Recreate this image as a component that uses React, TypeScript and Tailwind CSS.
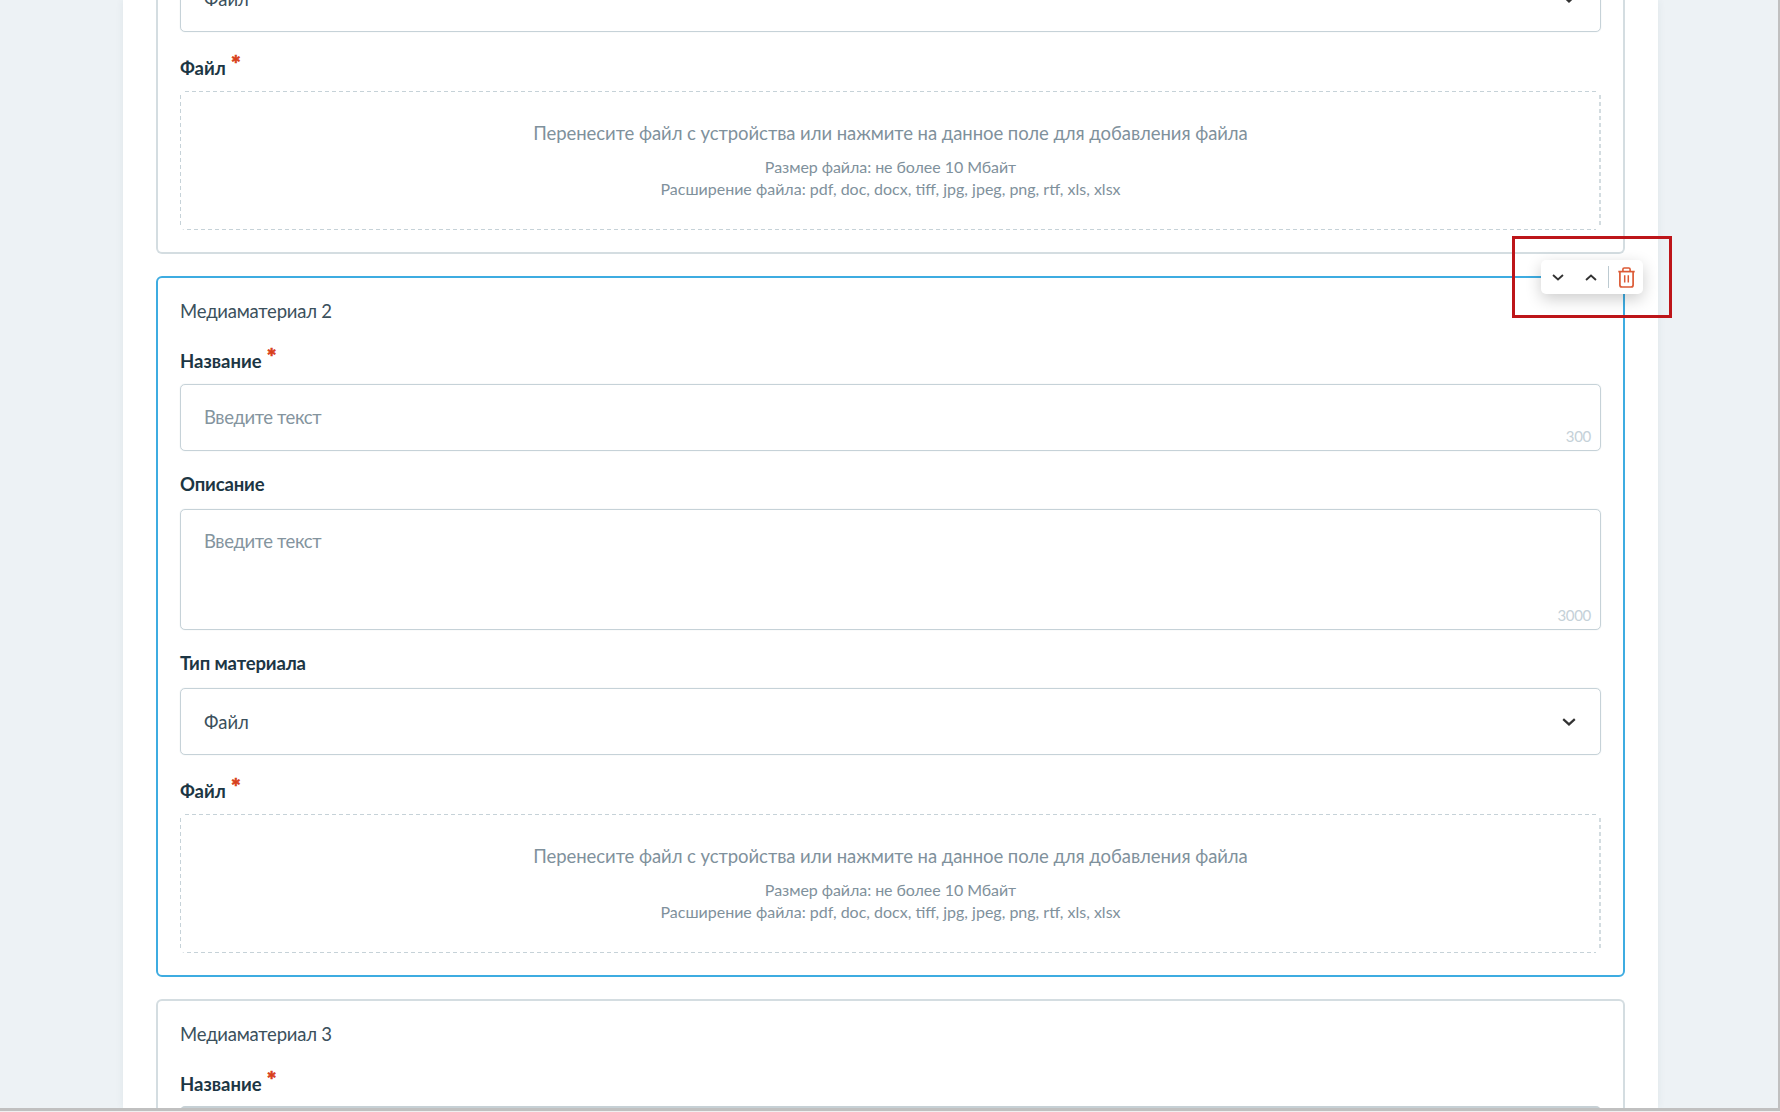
import React from 'react';

function Chevron({ className, up }: { className: string; up?: boolean }) {
  return (
    <svg viewBox="0 0 14 8" fill="none" className={className}>
      <path d={up ? 'M1.2 6.9 7 1.6l5.8 5.3' : 'M1.2 1.1 7 6.4l5.8-5.3'} stroke="#333333" strokeWidth="2.2" />
    </svg>
  );
}

function TrashIcon() {
  return (
    <svg viewBox="0 0 17 21" fill="none" stroke="#dc5a35" className="h-[21px] w-[17px]">
      <path d="M0.3 4.6H16.7" strokeWidth="1.7" />
      <path d="M4.9 4.4V2.3Q4.9 1 6.2 1H10.8Q12.1 1 12.1 2.3V4.4" strokeWidth="1.6" />
      <path d="M1.9 5V18Q1.9 20 3.9 20H13.1Q15.1 20 15.1 18V5" strokeWidth="1.7" />
      <path d="M6.7 8.3V15.6M10.3 8.3V15.6" strokeWidth="1.5" />
    </svg>
  );
}

function Label({ text, required, className }: { text: string; required?: boolean; className: string }) {
  return (
    <div className={`flex h-6 items-start text-[18.5px] leading-6 font-bold text-[#1c3644] ${className}`}>
      <span className={required ? '' : 'tracking-[-0.15px]'}>{text}</span>
      {required && (
        <span className="-mt-[5px] ml-[5px] text-[23px] leading-6 font-black text-[#d8401c] [-webkit-text-stroke:0.6px_#d8401c]">
          *
        </span>
      )}
    </div>
  );
}

const fieldBorder = 'border-[1.5px] border-[#c6d2d8] rounded-[5px] shadow-[0_0_1px_#c6d2d8]';

function TextField({ limit, className, pad }: { limit: string; className: string; pad: string }) {
  return (
    <div className={`relative px-[23px] ${fieldBorder} ${className} ${pad}`}>
      <span className="block text-[18.5px] leading-6 tracking-[-0.4px] text-[#84949e]">Введите текст</span>
      <span className="absolute right-[9px] bottom-[4px] text-[15px] leading-5 tracking-[-0.3px] text-[#c5d1d8]">{limit}</span>
    </div>
  );
}

function TypeSelect({ className }: { className: string }) {
  return (
    <div className={`flex h-[67px] items-center justify-between pr-[24px] pl-[23px] ${fieldBorder} ${className}`}>
      <span className="text-[18.5px] leading-6 text-[#3b505c]">Файл</span>
      <Chevron className="h-[8px] w-[14px]" />
    </div>
  );
}

function DropZone() {
  return (
    <div className="mt-[10px] flex h-[140px] flex-col items-center rounded-[5px] bg-[repeating-linear-gradient(90deg,#c6d2d8_0_4px,transparent_4px_7px),repeating-linear-gradient(90deg,#c6d2d8_0_4px,transparent_4px_7px),repeating-linear-gradient(180deg,#c6d2d8_0_4px,transparent_4px_7px),repeating-linear-gradient(180deg,#d3dce0_0_4px,transparent_4px_7px)] [background-position:5px_1px,0px_139px,0px_5px,100%_5px] [background-repeat:no-repeat] [background-size:calc(100%_-_10px)_1px,calc(100%_-_5px)_1px,1px_calc(100%_-_8px),2px_calc(100%_-_8px)] pt-[31px] text-[#7f919c]">
      <div className="text-[18.5px] leading-6 tracking-[-0.06px] whitespace-nowrap">
        Перенесите файл с устройства или нажмите на данное поле для добавления файла
      </div>
      <div className="mt-[10px] text-[16px] leading-[23px] tracking-[-0.06px] whitespace-nowrap">Размер файла: не более 10 Мбайт</div>
      <div className="-mt-px text-[16px] leading-[23px] whitespace-nowrap">
        Расширение файла: pdf, doc, docx, tiff, jpg, jpeg, png, rtf, xls, xlsx
      </div>
    </div>
  );
}

function CardTitle({ n }: { n: number }) {
  return (
    <div className="mt-[21px] text-[18.5px] leading-6 tracking-[-0.22px] text-[#3b505c]">Медиаматериал {n}</div>
  );
}

function Toolbar() {
  return (
    <div className="absolute -top-[18px] right-[-20px] flex h-[34px] w-[102px] items-center rounded-[5px] bg-white shadow-[0_5px_16px_rgba(0,0,0,0.2)]">
      <Chevron className="ml-[10.5px] h-[7px] w-[12px]" />
      <Chevron up className="ml-[21px] h-[7px] w-[12px]" />
      <span className="ml-[11.5px] h-[22px] w-px bg-[#bccad1]" />
      <span className="ml-[8.5px]">
        <TrashIcon />
      </span>
    </div>
  );
}

export default function App() {
  return (
    <div className="h-[1112px] w-[1780px] overflow-hidden bg-[#f0f0f0] font-['Lato','Open_Sans',sans-serif]">
      <div className="h-[1111px] overflow-hidden border-r-2 border-b-[3px] border-[#c0c0c0] bg-[#edf2f5]">
        <main className="relative ml-[123px] h-[1108px] w-[1535px] bg-white px-[33px] shadow-[0_0_8px_rgba(40,70,80,0.07)]">
          <section className="h-[254px] w-[1469px] rounded-b-[6px] border-x-2 border-b-2 border-[#d4dde1] px-[22px]">
            <TypeSelect className="relative -top-[35px] -mb-[35px]" />
            <Label text="Файл" required className="mt-[24px]" />
            <DropZone />
          </section>

          <section className="relative mt-[22px] h-[701px] w-[1469px] rounded-[6px] border-2 border-[#3eace1] px-[22px] pt-px">
            <div className="-mt-px flow-root">
              <CardTitle n={2} />
            </div>
            <Label text="Название" required className="mt-[26px]" />
            <TextField limit="300" className="mt-[11px] h-[67px]" pad="pt-[20px]" />
            <Label text="Описание" className="mt-[21px]" />
            <TextField limit="3000" className="mt-[13px] h-[121px]" pad="pt-[19px]" />
            <Label text="Тип материала" className="mt-[21px]" />
            <TypeSelect className="mt-[13px]" />
            <Label text="Файл" required className="mt-[24px]" />
            <DropZone />
            <Toolbar />
          </section>

          <section className="mt-[22px] h-[109px] w-[1469px] overflow-hidden rounded-t-[6px] border-x-2 border-t-2 border-[#d4dde1] px-[22px]">
            <CardTitle n={3} />
            <Label text="Название" required className="mt-[26px]" />
            <div className="mt-[10px] h-[10px] rounded-t-[5px] border-t-2 border-[#c6d0d5]" />
          </section>

          <div className="pointer-events-none absolute top-[236px] left-[1389px] h-[82px] w-[160px] border-[3px] border-[#bd1519]" />
        </main>
      </div>
    </div>
  );
}
